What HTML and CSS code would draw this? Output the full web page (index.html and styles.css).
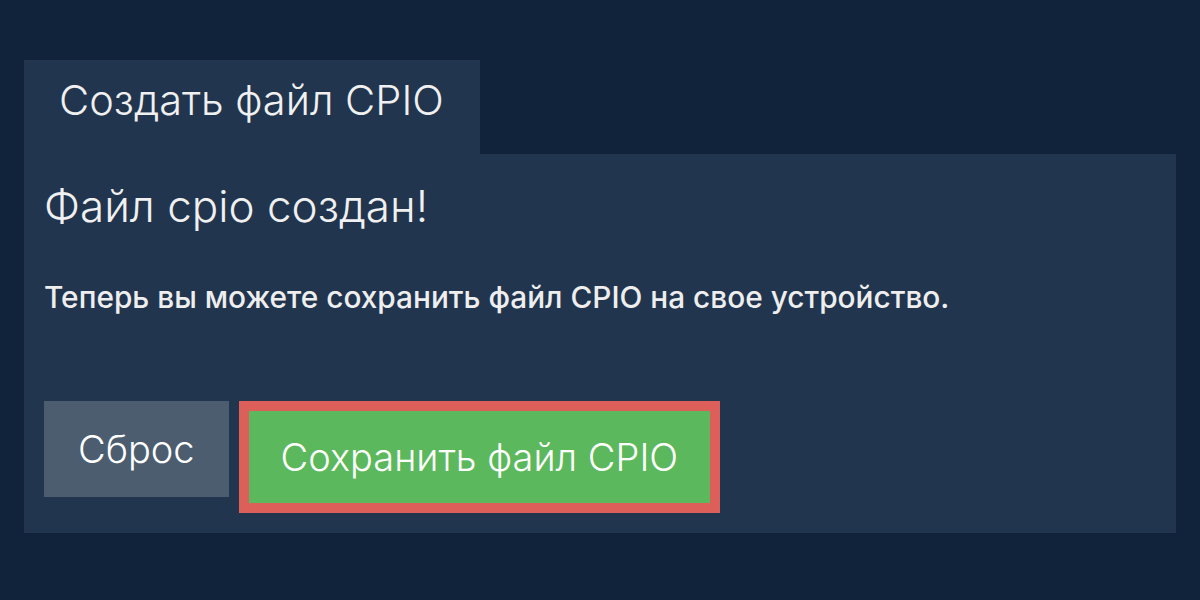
FILE: index.html
```html
<!DOCTYPE html>
<html lang="ru">
<head>
<meta charset="utf-8">
<link rel="stylesheet" href="styles.css">
</head>
<body>
<div class="page">
  <div class="tabs">
    <div class="tab">Создать файл CPIO</div>
  </div>
  <div class="panel">
    <h1 class="title">Файл cpio создан!</h1>
    <p class="message">Теперь вы можете сохранить файл CPIO на свое устройство.</p>
    <div class="actions">
      <button class="btn btn-reset">Сброс</button>
      <button class="btn btn-save">Сохранить файл CPIO</button>
    </div>
  </div>
</div>
</body>
</html>
```

FILE: styles.css
```css
html, body {
  margin: 0;
  padding: 0;
  background: #10233a;
  font-family: Inter, "Noto Sans", sans-serif;
  color: #f2f2f2;
}
.page {
  padding: 60px 24px 0 24px;
}
.tabs {
  display: flex;
}
.tab {
  background: #21354e;
  height: 94px;
  line-height: 80px;
  padding: 0 36px 0 35px;
  font-size: 41.5px;
  font-weight: 300;
  color: #f0f0f0;
}
.panel {
  background: #21354e;
  padding: 26px 20px 20px 20px;
  height: 379px;
  box-sizing: border-box;
}
.title {
  margin: 0;
  font-size: 44px;
  line-height: 53px;
  font-weight: 300;
  color: #f0f0f0;
}
.message {
  margin: 46px 0 0 0;
  font-size: 29.8px;
  line-height: 36px;
  font-weight: 500;
  color: #eeeeee;
}
.actions {
  display: flex;
  align-items: flex-start;
  gap: 10px;
  margin-top: 86px;
}
.btn {
  font-family: Inter, "Noto Sans", sans-serif;
  font-size: 38px;
  font-weight: 300;
  color: #ffffff;
  border: none;
  margin: 0;
  cursor: pointer;
}
.btn-reset {
  background: #4b5d6f;
  height: 96px;
  padding: 0 34px;
}
.btn-save {
  background: #5cb85c;
  border: 10px solid #dc5f5a;
  height: 112px;
  padding: 0 32px;
}
```
